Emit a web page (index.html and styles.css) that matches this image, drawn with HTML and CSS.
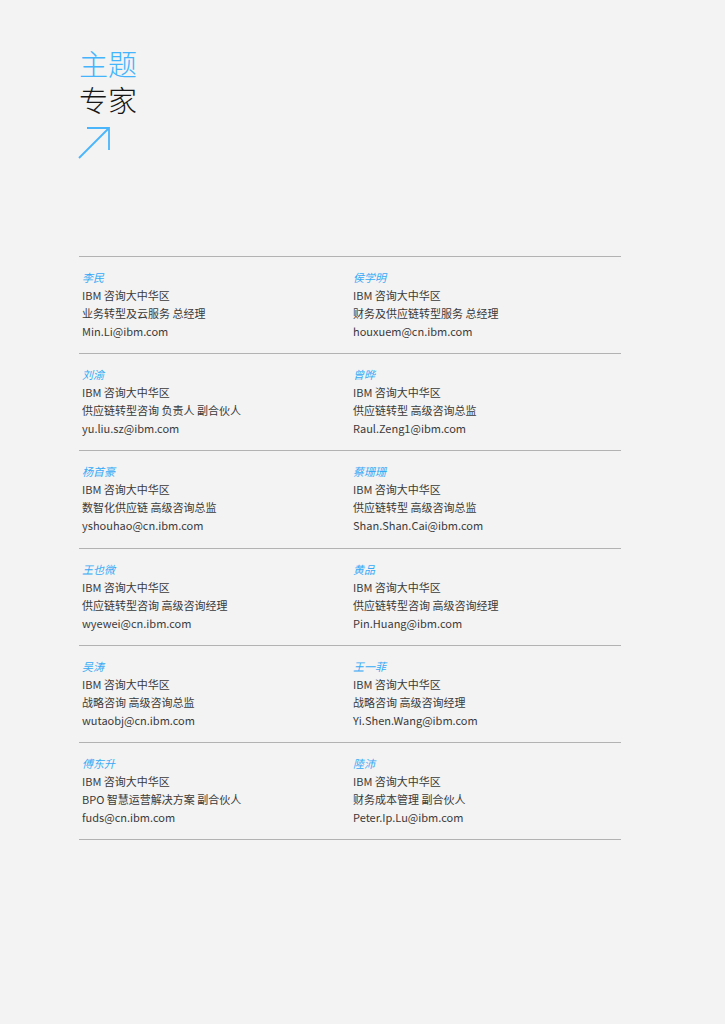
FILE: index.html
```html
<!DOCTYPE html>
<html lang="zh-CN">
<head>
    <meta charset="UTF-8">
    <meta name="viewport" content="width=device-width, initial-scale=1.0">
    <title>主题专家</title>
    <link rel="stylesheet" href="styles.css">
</head>
<body>

<div class="page">
    <div class="heading">
        <div class="heading-blue">主题</div>
        <div class="heading-dark">专家</div>
        <svg class="arrow" width="34" height="36" viewBox="0 0 34 36">
            <path d="M9 3 H31 V25 M31 3 L1 33" fill="none" stroke="#4ab5fb" stroke-width="1.8"/>
        </svg>
    </div>

    <div class="experts">
        <div class="row">
            <div class="person">
                <div class="name">李民</div>
                <div>IBM 咨询大中华区</div>
                <div>业务转型及云服务 总经理</div>
                <div>Min.Li@ibm.com</div>
            </div>
            <div class="person">
                <div class="name">侯学明</div>
                <div>IBM 咨询大中华区</div>
                <div>财务及供应链转型服务 总经理</div>
                <div>houxuem@cn.ibm.com</div>
            </div>
        </div>
        <div class="row">
            <div class="person">
                <div class="name">刘渝</div>
                <div>IBM 咨询大中华区</div>
                <div>供应链转型咨询 负责人 副合伙人</div>
                <div>yu.liu.sz@ibm.com</div>
            </div>
            <div class="person">
                <div class="name">曾晔</div>
                <div>IBM 咨询大中华区</div>
                <div>供应链转型 高级咨询总监</div>
                <div>Raul.Zeng1@ibm.com</div>
            </div>
        </div>
        <div class="row">
            <div class="person">
                <div class="name">杨首豪</div>
                <div>IBM 咨询大中华区</div>
                <div>数智化供应链 高级咨询总监</div>
                <div>yshouhao@cn.ibm.com</div>
            </div>
            <div class="person">
                <div class="name">蔡珊珊</div>
                <div>IBM 咨询大中华区</div>
                <div>供应链转型 高级咨询总监</div>
                <div>Shan.Shan.Cai@ibm.com</div>
            </div>
        </div>
        <div class="row">
            <div class="person">
                <div class="name">王也微</div>
                <div>IBM 咨询大中华区</div>
                <div>供应链转型咨询 高级咨询经理</div>
                <div>wyewei@cn.ibm.com</div>
            </div>
            <div class="person">
                <div class="name">黄品</div>
                <div>IBM 咨询大中华区</div>
                <div>供应链转型咨询 高级咨询经理</div>
                <div>Pin.Huang@ibm.com</div>
            </div>
        </div>
        <div class="row">
            <div class="person">
                <div class="name">吴涛</div>
                <div>IBM 咨询大中华区</div>
                <div>战略咨询 高级咨询总监</div>
                <div>wutaobj@cn.ibm.com</div>
            </div>
            <div class="person">
                <div class="name">王一菲</div>
                <div>IBM 咨询大中华区</div>
                <div>战略咨询 高级咨询经理</div>
                <div>Yi.Shen.Wang@ibm.com</div>
            </div>
        </div>
        <div class="row">
            <div class="person">
                <div class="name">傅东升</div>
                <div>IBM 咨询大中华区</div>
                <div>BPO 智慧运营解决方案 副合伙人</div>
                <div>fuds@cn.ibm.com</div>
            </div>
            <div class="person">
                <div class="name">陸沛</div>
                <div>IBM 咨询大中华区</div>
                <div>财务成本管理 副合伙人</div>
                <div>Peter.Ip.Lu@ibm.com</div>
            </div>
        </div>
    </div>
</div>

</body>
</html>
```

FILE: styles.css
```css
body {
    margin: 0;
    background-color: #f3f3f3;
    font-family: "Noto Sans CJK SC", "Noto Sans", sans-serif;
    color: #3a3a3a;
}
.page {
    width: 725px;
    height: 1024px;
    padding: 45px 104px 0 79px;
    box-sizing: border-box;
}
.heading {
    font-size: 29px;
    line-height: 36px;
    font-weight: 300;
}
.heading-blue {
    color: #44b4fc;
}
.heading-dark {
    color: #161616;
}
.arrow {
    display: block;
    margin-top: 8px;
    margin-left: -1px;
}
.experts {
    margin-top: 95px;
    border-bottom: 1.5px solid #b2b2b2;
}
.row {
    display: grid;
    grid-template-columns: 271px 1fr;
    border-top: 1.5px solid #b2b2b2;
    padding: 11px 0 13.2px;
}
.person {
    padding-left: 3px;
    font-size: 11px;
    line-height: 18px;
    font-weight: 400;
}
.name {
    color: #36aaf6;
    font-style: italic;
}
```
